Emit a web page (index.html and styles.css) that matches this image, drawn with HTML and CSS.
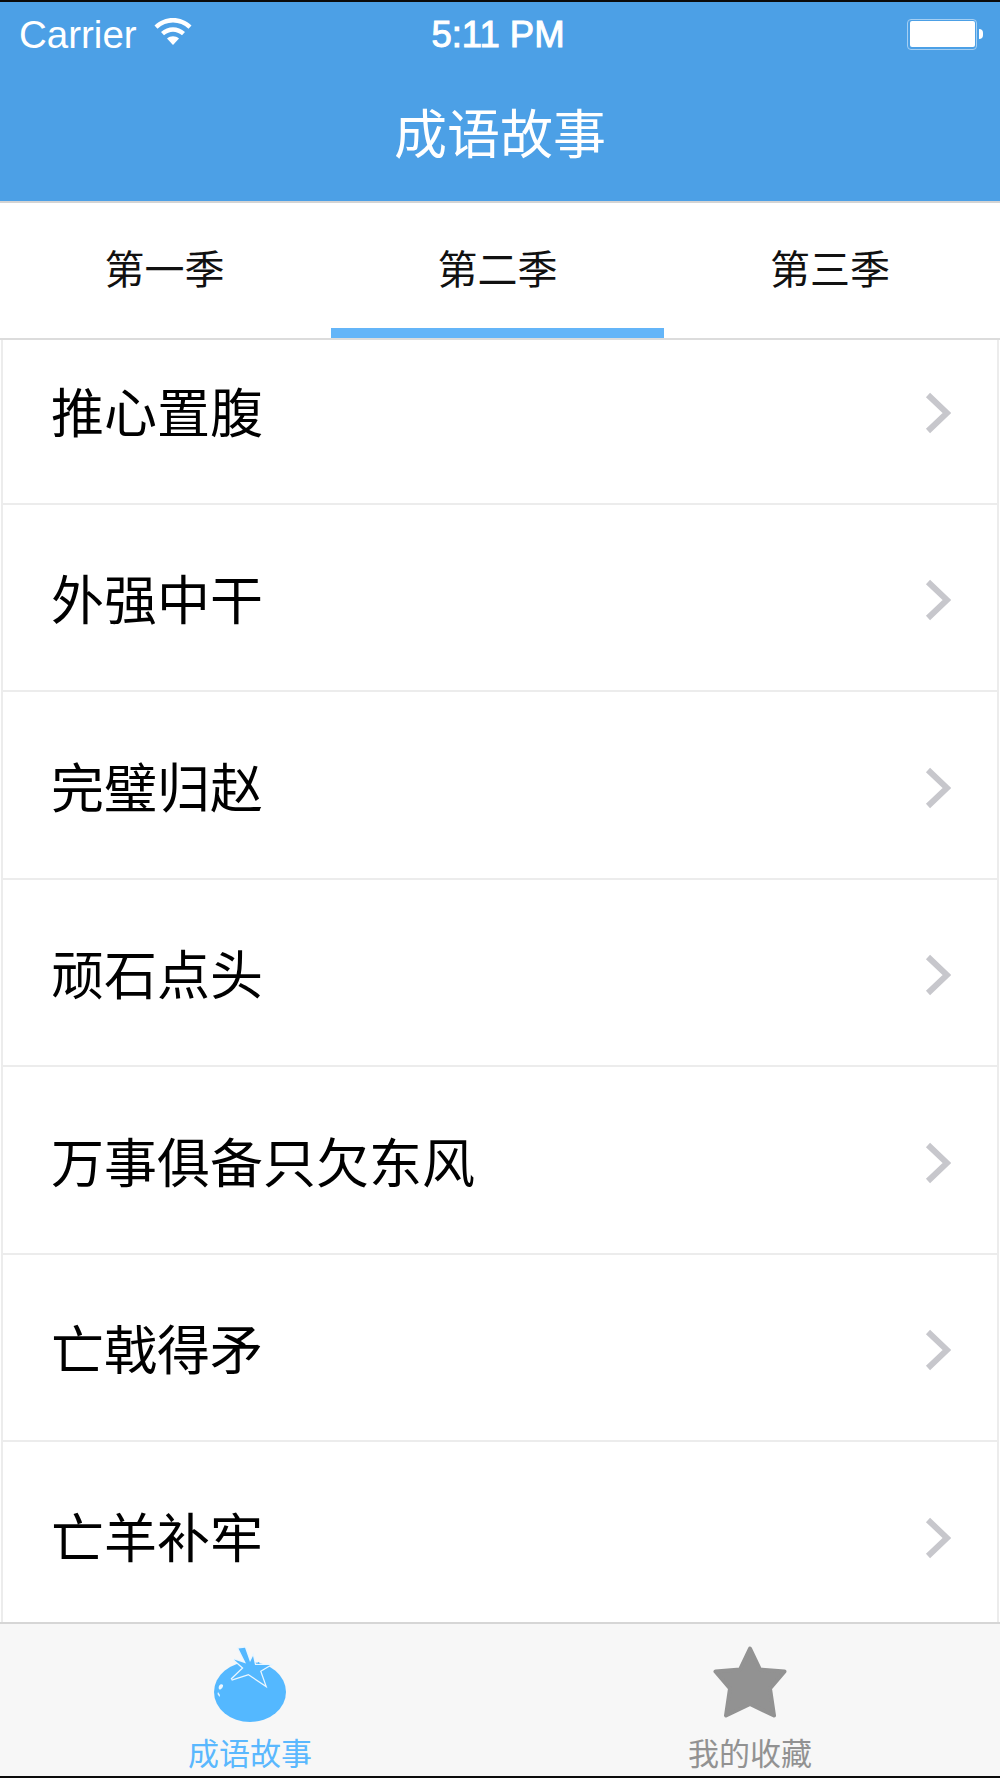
FILE: index.html
```html
<!DOCTYPE html>
<html lang="zh">
<head>
<meta charset="utf-8">
<title>成语故事</title>
<link rel="stylesheet" href="styles.css">
</head>
<body>
<div class="app">
  <header class="nav">
    <div class="status">
      <div class="status-left">
        <span class="carrier">Carrier</span>
        <svg class="wifi" viewBox="0 0 40 30" width="40" height="30"><path d="M1.500 9.500C11.500 -.5 28.500 -.5 38.500 9.500L35.500 12.800C27 4.500 13 4.500 4.500 12.800Z"/><path d="M8 16C15 9.500 25 9.500 32 16L29 19.300C23.500 14.500 16.500 14.500 11 19.300Z"/><path d="M14 22.500C17.500 19.500 22.500 19.500 26 22.500L20 29Z"/></svg>
      </div>
      <span class="time">5:11 PM</span>
      <div class="status-right">
        <span class="battery"><span class="battery-fill"></span></span>
        <span class="battery-tip"></span>
      </div>
    </div>
    <h1 class="title">成语故事</h1>
  </header>
  <nav class="tabs">
    <a class="tab tab-first">第一季</a>
    <a class="tab tab-active">第二季</a>
    <a class="tab tab-last">第三季</a>
  </nav>
  <ul class="list">
    <li class="row row-first"><span>推心置腹</span><svg class="chev" viewBox="0 0 26 42" width="26" height="42"><path d="M3 3L22 21L3 39"/></svg></li>
    <li class="row"><span>外强中干</span><svg class="chev" viewBox="0 0 26 42" width="26" height="42"><path d="M3 3L22 21L3 39"/></svg></li>
    <li class="row"><span>完璧归赵</span><svg class="chev" viewBox="0 0 26 42" width="26" height="42"><path d="M3 3L22 21L3 39"/></svg></li>
    <li class="row"><span>顽石点头</span><svg class="chev" viewBox="0 0 26 42" width="26" height="42"><path d="M3 3L22 21L3 39"/></svg></li>
    <li class="row"><span>万事俱备只欠东风</span><svg class="chev" viewBox="0 0 26 42" width="26" height="42"><path d="M3 3L22 21L3 39"/></svg></li>
    <li class="row"><span>亡戟得矛</span><svg class="chev" viewBox="0 0 26 42" width="26" height="42"><path d="M3 3L22 21L3 39"/></svg></li>
    <li class="row"><span>亡羊补牢</span><svg class="chev" viewBox="0 0 26 42" width="26" height="42"><path d="M3 3L22 21L3 39"/></svg></li>
  </ul>
  <footer class="tabbar">
    <a class="bar-item bar-active">
      <svg class="bar-icon" viewBox="0 0 80 80" width="80" height="80">
        <ellipse class="tomato" cx="40" cy="47" rx="36" ry="30"/>
        <path class="tomato tomato-star" d="M28.500 3.500L35 2.700L40 17L43 11L45 20L60 20L50 26L55 40L38.500 29L21.500 34.500L33.500 23L24 14.500L36 18.500Z"/>
        <circle class="tomato" cx="48.500" cy="18" r="1"/>
        <path class="gleam" d="M9 41C10 39 12 38.500 13 40C13.500 42 11 45 9.500 44.500C8.500 44 8.500 42 9 41Z"/>
        <path class="gleam" d="M8 47L10 50L9.500 52L7.500 49Z"/>
      </svg>
      <span class="bar-label">成语故事</span>
    </a>
    <a class="bar-item">
      <svg class="bar-icon" viewBox="0 0 80 80" width="80" height="80">
        <path class="star" d="M40 3.500L50 24.500L74.500 26.500L60 43.500L64 70.500L40 59L16 70.500L20 43.500L5.500 26.500L30 24.500Z"/>
      </svg>
      <span class="bar-label">我的收藏</span>
    </a>
  </footer>
</div>
</body>
</html>
```
FILE: styles.css
```css
* { box-sizing: border-box; margin: 0; padding: 0; }
html, body { width: 1000px; height: 1778px; overflow: hidden; background: #fff; }
body { font-family: "Noto Sans CJK SC", "Liberation Sans", sans-serif; font-weight: 400; }
.app { width: 1000px; height: 1778px; display: flex; flex-direction: column; border-top: 2px solid #0b0b0b; border-bottom: 2px solid #0b0b0b; }

.nav { height: 201px; flex: none; background: #4ca0e6; color: #fff; border-bottom: 2px solid #d4d4d4; }
.status { height: 62px; display: grid; grid-template-columns: 1fr auto 1fr; align-items: center; padding: 2px 17px 0 19px; }
.status-left { display: flex; align-items: center; gap: 16px; }
.carrier { font-family: "Liberation Sans", sans-serif; font-weight: 400; font-size: 38.500px; line-height: 60px; }
.wifi { fill: #fff; margin-top: -9px; }
.time { font-family: "Liberation Sans", sans-serif; font-weight: 400; font-size: 36.500px; line-height: 62px; -webkit-text-stroke: 1px #fff; transform: translateX(-3px); }
.status-right { display: flex; align-items: center; justify-content: flex-end; margin-top: -2px; }
.battery { width: 70px; height: 31px; border: 1.500px solid #a5cff3; border-radius: 4px; padding: 1.500px; display: block; }
.battery-fill { display: block; height: 100%; background: #fff; border-radius: 2px; }
.battery-tip { width: 4px; height: 10px; background: #fff; border-radius: 0 5px 5px 0; margin-left: 2px; }
.title { font-size: 53px; font-weight: 400; line-height: 134px; text-align: center; height: 137px; }

.tabs { height: 135px; flex: none; display: grid; grid-template-columns: 331px 333px 1fr; background: #fff; }
.tab { display: flex; align-items: center; justify-content: center; font-size: 40px; color: #111; padding-top: 2px; border-bottom: 10px solid transparent; }
.tab-first { padding-right: 2px; }
.tab-last { padding-right: 4px; }
.tab-active { border-bottom-color: #64b5f8; }

.list { flex: 1; min-height: 0; overflow: hidden; list-style: none; background: #fff; border-top: 2px solid #dcdcdc; padding: 0 1px; }
.row { height: 187.500px; display: flex; align-items: center; justify-content: space-between; font-size: 53px; color: #000; padding: 0 46px 0 48px; border: solid #ececec; border-width: 0 2px 2px; }
.row-first { height: 164.500px; padding-bottom: 22px; }
.chev { fill: none; stroke: #c7c7cc; stroke-width: 6; stroke-linecap: butt; margin-top: 6px; }

.tabbar { height: 154px; flex: none; display: grid; grid-template-columns: repeat(2, 1fr); background: #f7f7f7; border-top: 2px solid #d6d6d6; }
.bar-item { display: flex; flex-direction: column; align-items: center; font-size: 31px; line-height: 36px; color: #929292; padding-top: 21px; }
.bar-icon { display: block; height: 80px; margin-bottom: 9px; }
.bar-active { color: #5ab8fe; }
.tomato { fill: #54b8ff; }
.tomato-star { stroke: #eaf6ff; stroke-width: 2.500; paint-order: stroke; }
.gleam { fill: #eaf6ff; }
.star { fill: #929292; stroke: #929292; stroke-width: 4; stroke-linejoin: round; }
```
